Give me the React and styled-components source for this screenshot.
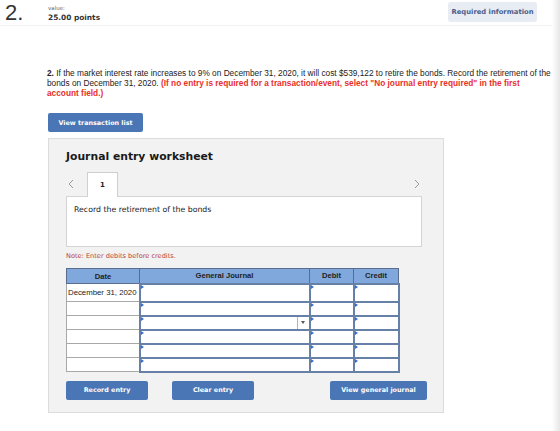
import React from 'react';
import styled, { createGlobalStyle } from 'styled-components';

const Global = createGlobalStyle`
  html, body { margin: 0; padding: 0; background: #fff; }
  body { font-family: "Liberation Sans", Arial, sans-serif; color: #222; }
  * { box-sizing: border-box; }
`;

const Page = styled.div`
  display: flex;
  width: 560px;
  min-height: 431px;
`;

const Main = styled.main`
  width: 552px;
  flex: none;
`;

const EdgeShade = styled.div`
  flex: 1;
  background: linear-gradient(to right, #fff, #e6e6e6);
`;

const TopBar = styled.header`
  display: flex;
  align-items: flex-start;
  height: 26px;
  border-bottom: 1px solid #f1f1f1;
`;

const QNumber = styled.div`
  width: 48px;
  padding: 3px 0 0 5px;
  font: 22px/20px "Liberation Sans", Arial, sans-serif;
  color: #333;
`;

const Score = styled.div`
  display: flex;
  flex-direction: column;
  padding-top: 5px;
`;

const ScoreLabel = styled.span`
  font: 5.5px/6px "DejaVu Sans", Verdana, sans-serif;
  color: #666;
`;

const ScoreValue = styled.span`
  margin-top: 2px;
  font: bold 7.4px/10px "DejaVu Sans", Verdana, sans-serif;
  color: #333;
`;

const InfoButton = styled.button`
  margin: 2px 15px 0 auto;
  width: 89px;
  height: 20px;
  padding: 0;
  border: none;
  border-radius: 3px;
  background: #e8ecf3;
  color: #4b5f8b;
  font: bold 6.8px "DejaVu Sans", Verdana, sans-serif;
`;

const Prompt = styled.p`
  margin: 42px 0 0 47px;
  font: 8.3px/10px "Liberation Sans", Arial, sans-serif;
  color: #222;
  white-space: nowrap;
`;

const Hint = styled.strong`
  color: #e8302a;
  font-weight: bold;
`;

const BlueButton = styled.button`
  width: ${p => p.$w}px;
  height: 19px;
  padding: 0;
  border: none;
  border-radius: 2px;
  background: #4a76b5;
  color: #fff;
  font: bold 6.4px "DejaVu Sans", Verdana, sans-serif;
`;

const ListButton = styled(BlueButton)`
  display: block;
  margin: 15px 0 0 48px;
`;

const Panel = styled.section`
  margin: 6px 0 0 48px;
  width: 396px;
  height: 275px;
  padding: 11px 16px 0 17px;
  background: #f2f2f2;
  border: 1px solid #dcdcdc;
`;

const PanelTitle = styled.h2`
  margin: 0;
  font: bold 10.8px/14px "DejaVu Sans", Verdana, sans-serif;
  color: #1a1a1a;
`;

const TabRow = styled.div`
  display: flex;
  align-items: flex-end;
  width: 356px;
  height: 24px;
  margin-top: 8px;
`;

const Chevron = styled.span`
  display: flex;
  align-items: center;
  justify-content: center;
  width: 10px;
  height: 24px;
  margin: ${p => (p.$right ? '0 0 0 auto' : '0')};
  color: #9a9a9a;
`;

const Tab = styled.div`
  display: flex;
  align-items: center;
  justify-content: center;
  width: 31px;
  height: 25px;
  margin: 0 0 -1px 11px;
  background: #fff;
  border: 1px solid #cfcfcf;
  border-bottom: none;
  position: relative;
  z-index: 1;
  font: bold 7px "DejaVu Sans", Verdana, sans-serif;
  color: #222;
`;

const EntryBox = styled.div`
  width: 356px;
  height: 51px;
  padding: 7px 0 0 7px;
  background: #fff;
  border: 1px solid #d4d4d4;
  font: 7.8px/12px "DejaVu Sans", Verdana, sans-serif;
  color: #222;
`;

const Note = styled.p`
  margin: 4px 0 0;
  font: 6.6px/10px "DejaVu Sans", Verdana, sans-serif;
  color: #b5423d;
`;

const Journal = styled.table`
  margin-top: 7px;
  width: 332px;
  border-collapse: collapse;
  table-layout: fixed;
`;

const Col = styled.col`
  width: ${p => p.$w}px;
`;

const HeadCell = styled.th`
  height: 15px;
  padding: 0;
  background: #80a8dd;
  border: 1px solid #5b6d8d;
  font: bold 7.6px "Liberation Sans", Arial, sans-serif;
  color: #222;
  text-align: center;
`;

const DateCell = styled.td`
  height: ${p => p.$h}px;
  padding: 0 0 0 1px;
  background: #fff;
  border: 1px solid #a8a8a8;
  font: 7.8px "Liberation Sans", Arial, sans-serif;
  color: #222;
  white-space: nowrap;
`;

const EntryCell = styled.td`
  height: ${p => p.$h}px;
  padding: 0;
  background: #fff;
  border: 2px solid #6780a8;
  vertical-align: top;
`;

const Field = styled.div`
  position: relative;
  display: flex;
  justify-content: flex-end;
  height: 100%;

  &::before {
    content: "";
    position: absolute;
    left: 0;
    top: 0;
    border-top: 2px solid transparent;
    border-bottom: 2px solid transparent;
    border-left: 3px solid #2f6fd8;
  }
`;

const DropSlot = styled.div`
  display: flex;
  align-items: center;
  justify-content: center;
  width: 12px;
  height: 100%;
  border-left: 1px solid #a9b6cc;

  &::after {
    content: "";
    border-left: 2.5px solid transparent;
    border-right: 2.5px solid transparent;
    border-top: 3px solid #555;
  }
`;

const ActionRow = styled.div`
  display: flex;
  margin-top: 8px;
`;

const ClearButton = styled(BlueButton)`
  margin-left: 24px;
`;

const JournalButton = styled(BlueButton)`
  margin-left: auto;
`;

const ArrowIcon = ({ dir }) => (
  <svg width="6" height="10" viewBox="0 0 6 10" fill="none">
    <polyline
      points={dir === 'left' ? '5,1 1,5 5,9' : '1,1 5,5 1,9'}
      stroke="currentColor"
      strokeWidth="1"
    />
  </svg>
);

const rows = [
  { date: 'December 31, 2020', h: 18, select: false },
  { date: '', h: 14, select: false },
  { date: '', h: 14, select: true },
  { date: '', h: 14, select: false },
  { date: '', h: 14, select: false },
  { date: '', h: 14, select: false },
];

export default function App() {
  return (
    <Page>
      <Global />
      <Main>
        <TopBar>
          <QNumber>2.</QNumber>
          <Score>
            <ScoreLabel>value:</ScoreLabel>
            <ScoreValue>25.00 points</ScoreValue>
          </Score>
          <InfoButton>Required information</InfoButton>
        </TopBar>

        <Prompt>
          <b>2.</b> If the market interest rate increases to 9% on December 31, 2020, it will cost $539,122 to retire the bonds. Record the retirement of the
          <br />
          bonds on December 31, 2020. <Hint>(If no entry is required for a transaction/event, select "No journal entry required" in the first</Hint>
          <br />
          <Hint>account field.)</Hint>
        </Prompt>

        <ListButton $w={95}>View transaction list</ListButton>

        <Panel>
          <PanelTitle>Journal entry worksheet</PanelTitle>
          <TabRow>
            <Chevron><ArrowIcon dir="left" /></Chevron>
            <Tab>1</Tab>
            <Chevron $right><ArrowIcon dir="right" /></Chevron>
          </TabRow>
          <EntryBox>Record the retirement of the bonds</EntryBox>
          <Note>Note: Enter debits before credits.</Note>

          <Journal>
            <colgroup>
              <Col $w={73} />
              <Col $w={170} />
              <Col $w={44} />
              <Col $w={45} />
            </colgroup>
            <thead>
              <tr>
                <HeadCell>Date</HeadCell>
                <HeadCell>General Journal</HeadCell>
                <HeadCell>Debit</HeadCell>
                <HeadCell>Credit</HeadCell>
              </tr>
            </thead>
            <tbody>
              {rows.map((r, i) => (
                <tr key={i}>
                  <DateCell $h={r.h}>{r.date}</DateCell>
                  <EntryCell $h={r.h}>
                    <Field>{r.select && <DropSlot />}</Field>
                  </EntryCell>
                  <EntryCell $h={r.h}><Field /></EntryCell>
                  <EntryCell $h={r.h}><Field /></EntryCell>
                </tr>
              ))}
            </tbody>
          </Journal>

          <ActionRow>
            <BlueButton $w={82}>Record entry</BlueButton>
            <ClearButton $w={82}>Clear entry</ClearButton>
            <JournalButton $w={97}>View general journal</JournalButton>
          </ActionRow>
        </Panel>
      </Main>
      <EdgeShade />
    </Page>
  );
}
